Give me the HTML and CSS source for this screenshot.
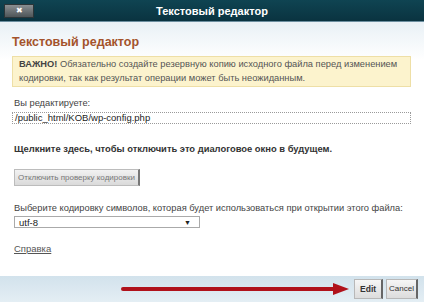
FILE: index.html
```html
<!DOCTYPE html>
<html lang="ru">

<head>
    <meta charset="UTF-8">
    <meta name="viewport" content="width=device-width, initial-scale=1.0">
    <title>Текстовый редактор</title>
    <link rel="stylesheet" href="styles.css">
</head>

<body>
    <div class="dialog">
        <div class="titlebar">
            <div class="close">&#x2716;</div>
            <div class="title">Текстовый редактор</div>
        </div>

        <div class="content">
            <h1 class="heading">Текстовый редактор</h1>

            <div class="warning">
                <div><b>ВАЖНО!</b> <span>Обязательно создайте резервную копию исходного файла перед изменением</span></div>
                <div>кодировки, так как результат операции может быть неожиданным.</div>
            </div>

            <div class="label first">Вы редактируете:</div>
            <div class="path">/public_html/KOB/wp-config.php</div>

            <div class="notice">Щелкните здесь, чтобы отключить это диалоговое окно в будущем.</div>
            <div class="small-btn">Отключить проверку кодировки</div>

            <div class="label">Выберите кодировку символов, которая будет использоваться при открытии этого файла:</div>
            <div class="select">
                <span>utf-8</span>
                <span class="caret">&#9660;</span>
            </div>

            <a class="help" href="#">Справка</a>
        </div>

        <div class="footer">
            <svg class="arrow" width="230" height="14" viewBox="0 0 230 14">
                <line x1="2" y1="7" x2="214" y2="7" stroke="#b0121b" stroke-width="4" stroke-linecap="round" />
                <polygon points="212,1 228,7 212,13" fill="#b0121b" />
            </svg>
            <div class="btn btn-edit">Edit</div>
            <div class="btn">Cancel</div>
        </div>
    </div>
</body>

</html>
```

FILE: styles.css
```css
body {
    margin: 0;
    font-family: "Liberation Sans", Arial, sans-serif;
    color: #333;
}

.dialog {
    width: 424px;
    height: 302px;
    display: flex;
    flex-direction: column;
    background: linear-gradient(#dce8f0, #ffffff 60px);
}

.titlebar {
    height: 21px;
    display: flex;
    align-items: center;
    background: linear-gradient(#0f4452, #0a3340);
    border-bottom: 1px solid #6d8fa0;
}

.close {
    margin-left: 4px;
    width: 28px;
    height: 12px;
    line-height: 12px;
    text-align: center;
    font-size: 8px;
    color: #fff;
    background: linear-gradient(#8a8f92, #4e5558);
    border: 1px solid #2b3538;
}

.title {
    flex: 1;
    text-align: center;
    color: #fff;
    font-weight: bold;
    font-size: 11px;
    margin-right: 34px;
}

.content {
    flex: 1;
    padding: 0 13px 0 12px;
}

.heading {
    margin: 13px 0 7px;
    font-size: 12.5px;
    color: #a4532b;
}

.warning {
    background: #fcf3cd;
    border: 1px solid #eedfa6;
    padding: 0 6px 1px;
    font-size: 9.3px;
    line-height: 14px;
    color: #555;
    white-space: nowrap;
}

.warning b {
    color: #444;
}

.label {
    margin: 18px 2px 0;
    font-size: 9.3px;
    line-height: 9px;
    color: #444;
}

.label.first {
    margin: 11px 2px 3px;
    line-height: 11px;
}

.path {
    border: 1px dotted #9a9a9a;
    padding: 0 2px;
    font-size: 9.5px;
    line-height: 10px;
    color: #222;
}

.notice {
    margin: 19px 2px 12px;
    font-size: 9.4px;
    font-weight: bold;
    color: #333;
}

.small-btn {
    display: inline-block;
    margin-left: 2px;
    padding: 3px 3px;
    font-size: 8px;
    line-height: 9px;
    color: #777;
    background: linear-gradient(#f2f2f2, #dadada);
    border: 1px solid #bcbcbc;
    border-right: 2px solid #777;
}

.select {
    margin: 3px 0 0 2px;
    width: 172px;
    height: 10px;
    display: flex;
    justify-content: space-between;
    align-items: center;
    padding: 0 8px 0 4px;
    border: 1px solid #aaa;
    font-size: 9.5px;
    color: #222;
}

.caret {
    font-size: 7px;
}

.help {
    display: inline-block;
    margin: 15px 2px 0;
    font-size: 9.5px;
    color: #555;
}

.footer {
    height: 26px;
    display: flex;
    justify-content: flex-end;
    align-items: center;
    gap: 3px;
    padding-right: 6px;
    background: linear-gradient(#d2e2ec, #e4eef4);
}

.btn {
    height: 18px;
    line-height: 18px;
    padding: 0 2px;
    font-size: 8px;
    color: #333;
    background: linear-gradient(#f6f6f6, #dcdcdc);
    border: 1px solid #b8b8b8;
    border-right: 2px solid #666;
}

.btn-edit {
    padding: 0 5px;
    font-size: 8.5px;
    font-weight: bold;
}
```
